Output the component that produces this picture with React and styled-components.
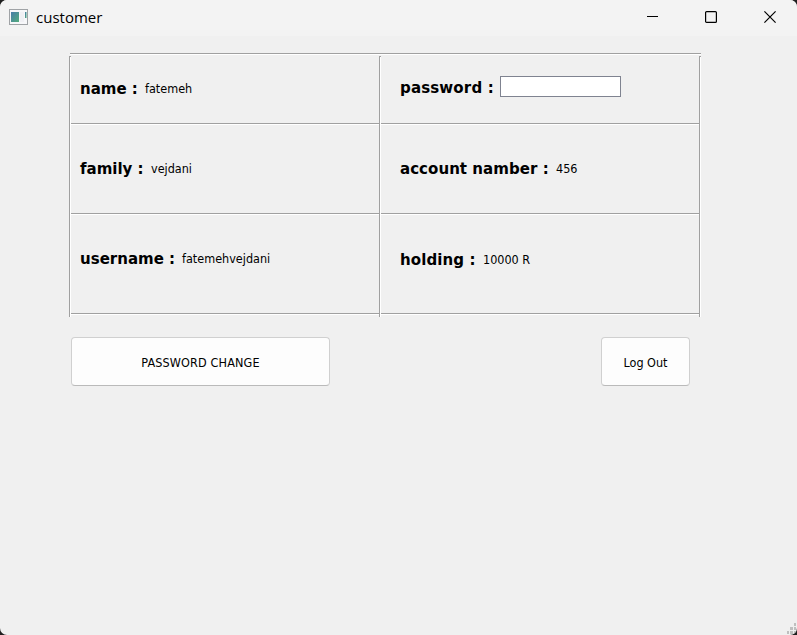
import React from "react";
import styled, { createGlobalStyle } from "styled-components";

const Global = createGlobalStyle`
  * { box-sizing: border-box; }
  body { margin: 0; background: #202020; overflow: hidden; }
  button, input { font: inherit; color: inherit; margin: 0; padding: 0; }
`;

const Window = styled.div`
  position: relative;
  display: flex;
  flex-direction: column;
  width: 797px;
  height: 635px;
  overflow: hidden;
  border-radius: 7px;
  background: #f0f0f0;
  color: #000;
  font: 12.5px "DejaVu Sans Condensed", "DejaVu Sans", sans-serif;
`;

const TitleBar = styled.header`
  display: flex;
  align-items: center;
  height: 36px;
  padding: 0 0 2px 9px;
  background: #f3f3f3;
`;

const Title = styled.h1`
  flex: 1;
  margin: 0 0 0 8px;
  font: 400 15px/20px "Open Sans", sans-serif;
`;

const Captions = styled.div`
  display: flex;
  gap: 47px;
  padding-right: 21px;
`;

const Caption = styled.button`
  display: grid;
  place-items: center;
  width: 12px;
  height: 12px;
  border: 0;
  background: transparent;
`;

const Content = styled.main`
  display: flex;
  flex-direction: column;
  width: 632px;
  margin: 17px 0 0 69px;
`;

const TopRule = styled.div`
  height: 2px;
  margin: 0 0 1px 1px;
  border-top: 1px solid #a0a0a0;
  border-bottom: 1px solid #fff;
`;

const Table = styled.section`
  display: grid;
  grid-template-columns: 310px 320px 2px;
  height: 261px;
`;

const Column = styled.div`
  border-left: 1px solid #a0a0a0;
  padding-left: 1px;
  background: linear-gradient(#a0a0a0 1px, #fff 1px) 0 0 / 1px 100% no-repeat;
`;

const Cell = styled.div`
  display: flex;
  align-items: flex-start;
  height: ${(p) => p.$height}px;
  padding: ${(p) => p.$top}px 0 0 ${(p) => p.$left}px;
  border-bottom: 1px solid #fff;
  box-shadow: inset 0 -1px #a0a0a0;
  white-space: nowrap;
`;

const Label = styled.label`
  width: ${(p) => p.$width}px;
  font-size: 16.7px;
  font-weight: 700;
  line-height: 18px;
  letter-spacing: ${(p) => p.$spacing || 0}px;
`;

const Value = styled.span`
  line-height: 20px;
`;

const Password = styled.input`
  width: 121px;
  height: 21px;
  margin-top: -2px;
  border: 1px solid #7f8390;
  border-radius: 0;
  background: #fff;
  outline: 0;
`;

const Actions = styled.div`
  display: flex;
  justify-content: space-between;
  padding: 20px 11px 0 2px;
`;

const Button = styled.button`
  width: ${(p) => p.$width}px;
  height: 49px;
  padding-top: 2px;
  border: 1px solid #d0d0d0;
  border-bottom-color: #bababa;
  border-radius: 4px;
  background: #fdfdfd;
  letter-spacing: ${(p) => p.$spacing || 0}px;
`;

const Grip = styled.svg`
  position: absolute;
  right: 0;
  bottom: 1px;
`;

const AppIcon = () => (
  <svg width="19" height="16" viewBox="0 0 19 16">
    <defs>
      <linearGradient id="screen" x1="0" y1="0" x2="1" y2="1">
        <stop offset="0" stopColor="#487ca8" />
        <stop offset="1" stopColor="#52ac7c" />
      </linearGradient>
    </defs>
    <rect x=".5" y=".5" width="18" height="15" fill="#f7f7f9" stroke="#a0a3a6" />
    <rect x="2" y="3" width="8" height="10" fill="url(#screen)" />
    <rect x="11" y="3" width="4" height="10" fill="#f0f0f4" />
    <rect x="16" y="3" width="1.5" height="6" fill="url(#screen)" />
  </svg>
);

const fields = [
  [
    { label: "name :", value: "fatemeh", width: 65, height: 69, top: 23 },
    { label: "family :", value: "vejdani", width: 71, height: 90, top: 34 },
    { label: "username :", value: "fatemehvejdani", width: 102, height: 100, top: 34 },
  ],
  [
    { label: "password :", width: 100, height: 69, top: 22, spacing: 0.15 },
    { label: "account namber :", value: "456", width: 156, height: 90, top: 34, spacing: 0.04 },
    { label: "holding :", value: "10000 R", width: 83, height: 100, top: 35, spacing: 0.1 },
  ],
];

export default function App() {
  return (
    <>
      <Global />
      <Window>
        <TitleBar>
          <AppIcon />
          <Title>customer</Title>
          <Captions>
            <Caption aria-label="Minimize">
              <svg width="12" height="12"><path d="M1 5.5H12" stroke="#000" /></svg>
            </Caption>
            <Caption aria-label="Maximize">
              <svg width="12" height="12"><rect x=".6" y=".6" width="10.8" height="10.8" rx="1" fill="none" stroke="#000" strokeWidth="1.2" /></svg>
            </Caption>
            <Caption aria-label="Close">
              <svg width="12" height="12"><path d="M.4 .4L11.6 11.6M11.6 .4L.4 11.6" stroke="#000" strokeWidth="1.2" /></svg>
            </Caption>
          </Captions>
        </TitleBar>
        <Content>
          <TopRule />
          <Table>
            {fields.map((column, i) => (
              <Column key={i}>
                {column.map((f) => (
                  <Cell key={f.label} $height={f.height} $top={f.top} $left={i ? 19 : 9}>
                    <Label $width={f.width} $spacing={f.spacing}>{f.label}</Label>
                    {f.value ? <Value>{f.value}</Value> : <Password type="password" aria-label="password" />}
                  </Cell>
                ))}
              </Column>
            ))}
            <Column />
          </Table>
          <Actions>
            <Button $width={259} $spacing={0.15}>PASSWORD CHANGE</Button>
            <Button $width={89}>Log Out</Button>
          </Actions>
        </Content>
        <Grip width="10" height="11" fill="#bfbfbf">
          <path d="M7 0h2v3H7zM3 4h3v3H3zM7 4h2v3H7zM0 8h2v3H0zM3 8h3v3H3zM7 8h2v3H7z" />
        </Grip>
      </Window>
    </>
  );
}
